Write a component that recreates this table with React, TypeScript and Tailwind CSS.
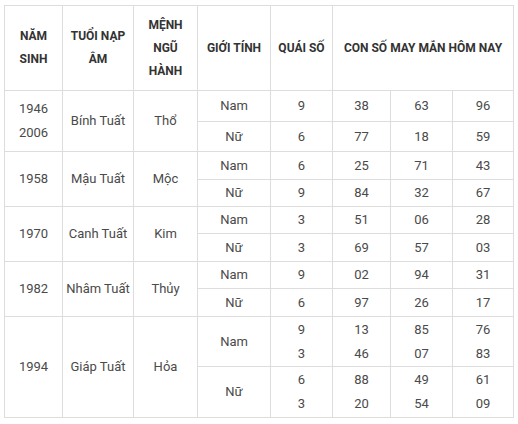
import React from 'react';

type Row = {
  years: string[];
  tuoi: string;
  menh: string;
  h: [number, number];
  nam: { qs: string[]; nums: string[][] };
  nu: { qs: string[]; nums: string[][] };
};

const rows: Row[] = [
  { years: ['1946', '2006'], tuoi: 'Bính Tuất', menh: 'Thổ', h: [31, 30],
    nam: { qs: ['9'], nums: [['38'], ['63'], ['96']] }, nu: { qs: ['6'], nums: [['77'], ['18'], ['59']] } },
  { years: ['1958'], tuoi: 'Mậu Tuất', menh: 'Mộc', h: [28, 27],
    nam: { qs: ['6'], nums: [['25'], ['71'], ['43']] }, nu: { qs: ['9'], nums: [['84'], ['32'], ['67']] } },
  { years: ['1970'], tuoi: 'Canh Tuất', menh: 'Kim', h: [27, 28],
    nam: { qs: ['3'], nums: [['51'], ['06'], ['28']] }, nu: { qs: ['3'], nums: [['69'], ['57'], ['03']] } },
  { years: ['1982'], tuoi: 'Nhâm Tuất', menh: 'Thủy', h: [27, 28],
    nam: { qs: ['9'], nums: [['02'], ['94'], ['31']] }, nu: { qs: ['6'], nums: [['97'], ['26'], ['17']] } },
  { years: ['1994'], tuoi: 'Giáp Tuất', menh: 'Hỏa', h: [50, 51],
    nam: { qs: ['9', '3'], nums: [['13', '46'], ['85', '07'], ['76', '83']] },
    nu: { qs: ['6', '3'], nums: [['88', '20'], ['49', '54'], ['61', '09']] } },
];

const td = 'border border-[#dddddd] text-center align-middle p-0 leading-[24px]';
const th = 'border border-[#dddddd] text-center align-middle p-0 font-bold text-[12px] text-[#333333] leading-[23px]';

const Lines: React.FC<{ items: string[] }> = ({ items }) => (
  <>
    {items.map((s, i) => (
      <div key={i}>{s}</div>
    ))}
  </>
);

export default function App() {
  return (
    <div className="bg-white w-[518px] h-[424px] pl-[4px] pt-[5px]" style={{ fontFamily: 'Roboto, sans-serif' }}>
      <table className="table-fixed border-collapse w-[509px] text-[13px] text-[#4a4a4a]">
        <colgroup>
          <col className="w-[58px]" />
          <col className="w-[71px]" />
          <col className="w-[64px]" />
          <col className="w-[73px]" />
          <col className="w-[62px]" />
          <col className="w-[58px]" />
          <col className="w-[62px]" />
          <col className="w-[61px]" />
        </colgroup>
        <thead>
          <tr className="h-[85px]">
            <th className={th}>NĂM<br />SINH</th>
            <th className={th}>TUỔI NẠP<br />ÂM</th>
            <th className={th}>MỆNH<br />NGŨ<br />HÀNH</th>
            <th className={th}>GIỚI TÍNH</th>
            <th className={th}>QUÁI SỐ</th>
            <th className={th} colSpan={3}>CON SỐ MAY MẮN HÔM NAY</th>
          </tr>
        </thead>
        <tbody>
          {rows.map((r) => (
            <React.Fragment key={r.tuoi}>
              <tr style={{ height: r.h[0] }}>
                <td className={td} rowSpan={2}><Lines items={r.years} /></td>
                <td className={td} rowSpan={2}>{r.tuoi}</td>
                <td className={td} rowSpan={2}>{r.menh}</td>
                <td className={td}>Nam</td>
                <td className={td}><Lines items={r.nam.qs} /></td>
                {r.nam.nums.map((n, i) => (
                  <td key={i} className={td}><Lines items={n} /></td>
                ))}
              </tr>
              <tr style={{ height: r.h[1] }}>
                <td className={td}>Nữ</td>
                <td className={td}><Lines items={r.nu.qs} /></td>
                {r.nu.nums.map((n, i) => (
                  <td key={i} className={td}><Lines items={n} /></td>
                ))}
              </tr>
            </React.Fragment>
          ))}
        </tbody>
      </table>
    </div>
  );
}
